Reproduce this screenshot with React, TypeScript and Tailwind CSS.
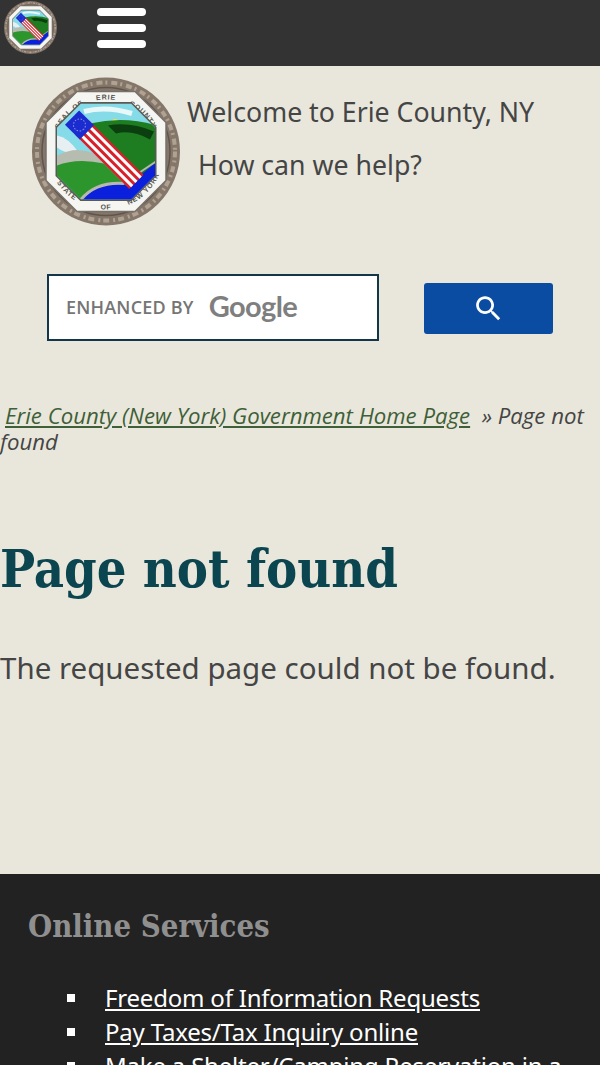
import React from 'react';

const SANS = { fontFamily: '"Noto Sans", "Open Sans", sans-serif' };
const SERIF = { fontFamily: '"DejaVu Serif Condensed", "DejaVu Serif", serif' };

const SCENE = '49,26 99,26 123,50 123,98 99,122 49,122 25,98 25,50';

const Seal: React.FC<{ className?: string; id: string; showText?: boolean }> = ({ className, id, showText = true }) => (
  <svg viewBox="0 0 148 148" className={className}>
    <defs>
      <clipPath id={`${id}-scene`}>
        <polygon points={SCENE} />
      </clipPath>
      <path id={`${id}-top`} d="M 22 74 A 52 52 0 0 1 126 74" />
      <path id={`${id}-bot`} d="M 16 74 A 58 58 0 0 0 132 74" />
    </defs>
    <circle cx="74" cy="74" r="74" fill="#85766a" />
    <circle cx="74" cy="74" r="69" fill="none" stroke="#b0a292" strokeWidth="4" strokeDasharray="6 3 2 4" />
    <circle cx="74" cy="74" r="64" fill="none" stroke="#5f554c" strokeWidth="1.5" />
    <polygon points="45,14 103,14 134,45 134,103 103,134 45,134 14,103 14,45" fill="#f5f5f1" stroke="#77716a" strokeWidth="1.5" />
    {showText && (
      <g fontFamily='"Liberation Sans", sans-serif' fontSize="7" fontWeight="700" fill="#55554f" letterSpacing="0.8">
        <text><textPath href={`#${id}-top`} startOffset="25%" textAnchor="middle">SEAL OF</textPath></text>
        <text><textPath href={`#${id}-top`} startOffset="50%" textAnchor="middle">ERIE</textPath></text>
        <text><textPath href={`#${id}-top`} startOffset="75%" textAnchor="middle">COUNTY</textPath></text>
        <text><textPath href={`#${id}-bot`} startOffset="25%" textAnchor="middle">STATE</textPath></text>
        <text><textPath href={`#${id}-bot`} startOffset="50%" textAnchor="middle">OF</textPath></text>
        <text><textPath href={`#${id}-bot`} startOffset="75%" textAnchor="middle">NEW YORK</textPath></text>
      </g>
    )}
    <polygon points={SCENE} fill="#5a5a55" stroke="#5a5a55" strokeWidth="3" />
    <g clipPath={`url(#${id}-scene)`}>
      <rect x="20" y="22" width="108" height="104" fill="#86dbe8" />
      <path d="M52 34 Q 74 28 100 36" fill="none" stroke="#e8f8f8" strokeWidth="5" />
      <circle cx="83" cy="45" r="3.5" fill="#f2e04a" />
      <path d="M58 46 Q 92 38 125 48 L 125 92 L 108 110 Z" fill="#1d7d20" />
      <path d="M76 48 Q 98 44 122 54 L 118 62 Q 100 52 84 56 Z" fill="#0b3f10" />
      <path d="M25 58 Q 36 60 46 74 Q 36 78 25 70 Z" fill="#e8eff2" />
      <path d="M25 78 Q 44 68 62 76 L 72 86 Q 45 82 25 90 Z" fill="#b6bcb0" />
      <path d="M25 88 Q 45 80 72 86 L 96 110 Q 70 108 54 124 L 25 120 Z" fill="#2c962c" />
      <path d="M48 124 Q 66 102 96 108 L 125 84 L 125 125 Z" fill="#0a20dc" />
      <path d="M49 122 Q 64 104 92 106" fill="none" stroke="#b8b8b0" strokeWidth="3" />
      <path d="M106 96 L 124 84" fill="none" stroke="#b8b8b0" strokeWidth="2" />
    </g>
    <g transform="rotate(45 74 74)">
      <rect x="40" y="64" width="77" height="20" fill="#d7202a" />
      <rect x="44" y="66.5" width="73" height="3" fill="#ffffff" />
      <rect x="44" y="72.5" width="73" height="3" fill="#ffffff" />
      <rect x="44" y="78.5" width="73" height="3" fill="#ffffff" />
      <rect x="26" y="64" width="21" height="20" fill="#1a2bd0" />
      <circle cx="36.5" cy="74" r="6" fill="none" stroke="#8c93e6" strokeWidth="1" strokeDasharray="1.5 1.5" />
    </g>
  </svg>
);

export default function App() {
  return (
    <div className="h-[1065px] w-[600px] overflow-hidden bg-[#e9e7dc] text-[#454545]" style={SANS}>
      <header className="flex h-[66px] items-start gap-10 bg-[#333333] pl-1 pt-px">
        <Seal className="h-[53px] w-[53px]" id="small" showText={false} />
        <div className="flex flex-col gap-2 pt-[7px]">
          <span className="h-2 w-[49px] rounded-sm bg-white" />
          <span className="h-2 w-[49px] rounded-sm bg-white" />
          <span className="h-2 w-[49px] rounded-sm bg-white" />
        </div>
      </header>

      <div className="flex items-start pl-8 pt-[11px]">
        <Seal className="h-[149px] w-[148px] shrink-0" id="large" />
        <div className="pl-[7px] pt-[15px] text-[26.7px] leading-[40px]">
          <div>Welcome to Erie County, NY</div>
          <div className="mt-[13px] pl-[11px]">How can we help?</div>
        </div>
      </div>

      <div className="mt-[48px] flex items-center pl-[47px]">
        <div className="flex h-[67px] w-[332px] items-center gap-[15px] border-2 border-[#12374a] bg-white pl-[17px]">
          <span className="text-[18px] font-semibold tracking-[0.2px] text-[#757575]" style={{ fontFamily: '"Open Sans", sans-serif' }}>ENHANCED BY</span>
          <span className="-mt-1 text-[29px] font-bold tracking-[-0.6px] text-[#7f7f7f]" style={{ fontFamily: 'Lato, sans-serif' }}>Google</span>
        </div>
        <button className="ml-[45px] mt-[2px] flex h-[51px] w-[129px] items-center justify-center rounded-[3px] bg-[#0b4ca3] text-white">
          <svg viewBox="0 0 24 24" className="h-[33px] w-[33px]" fill="currentColor">
            <path d="M15.5 14h-.79l-.28-.27C15.41 12.59 16 11.11 16 9.5 16 5.91 13.09 3 9.5 3S3 5.91 3 9.5 5.91 16 9.5 16c1.61 0 3.09-.59 4.23-1.57l.27.28v.79l5 4.99L20.49 19l-4.99-5zm-6 0C7.01 14 5 11.99 5 9.5S7.01 5 9.5 5 14 7.01 14 9.5 11.99 14 9.5 14z" />
          </svg>
        </button>
      </div>

      <div className="mt-[62px] text-[22.2px] italic leading-[26px]" style={{ fontFamily: '"Open Sans", sans-serif' }}>
        <a className="ml-[5px] text-[#3f5f38] underline">Erie County (New York) Government Home Page</a>
        <span> &nbsp;» Page not found</span>
      </div>

      <h1 className="mt-[79px] text-[52px] font-bold leading-[70px] text-[#0b4650] font-stretch-condensed" style={SERIF}>
        Page not found
      </h1>
      <p className="mt-[44px] text-[29.5px] leading-[40px]">The requested page could not be found.</p>

      <footer className="mt-[186px] h-[400px] bg-[#222222] px-7 pt-[30px]">
        <h2 className="text-[30.8px] font-bold leading-[44px] text-[#8f8f8f] font-stretch-condensed" style={SERIF}>Online Services</h2>
        <ul className="mt-[33px] flex flex-col pl-[39px] text-[24px] leading-[34px] tracking-[-0.2px] text-white">
          <li className="flex items-center gap-[30px]"><span className="h-2 w-2 shrink-0 bg-white" /><a className="underline">Freedom of Information Requests</a></li>
          <li className="flex items-center gap-[30px]"><span className="h-2 w-2 shrink-0 bg-white" /><a className="underline">Pay Taxes/Tax Inquiry online</a></li>
          <li className="flex items-center gap-[30px]"><span className="h-2 w-2 shrink-0 bg-white" /><a className="underline whitespace-nowrap">Make a Shelter/Camping Reservation in a</a></li>
        </ul>
      </footer>
    </div>
  );
}
